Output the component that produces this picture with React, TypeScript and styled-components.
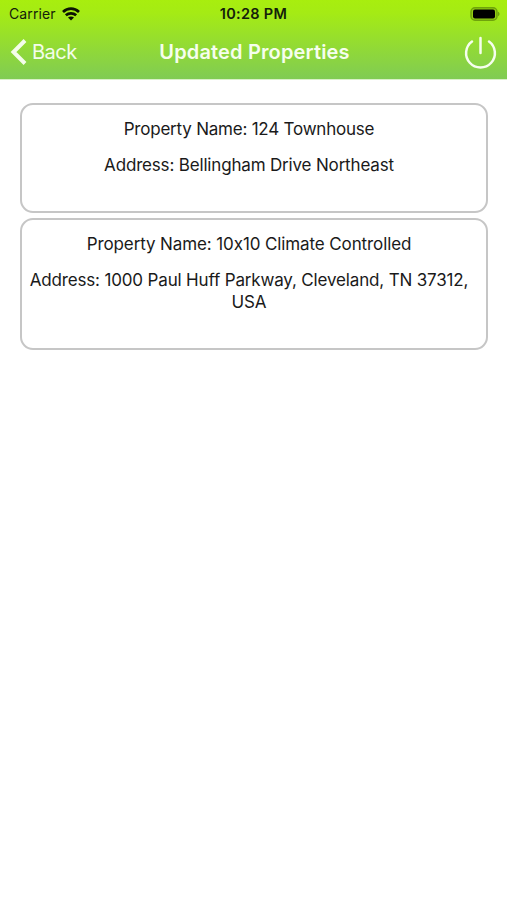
import React from "react";
import styled, { createGlobalStyle } from "styled-components";

const GlobalStyle = createGlobalStyle`
  * { box-sizing: border-box; }
  body { margin: 0; background: #fff; font-family: Inter, "Liberation Sans", sans-serif; }
`;

const Screen = styled.div`
  min-height: 900px;
  background: #fff;
`;

const Header = styled.header`
  height: 80px;
  border-bottom: 1px solid #d9f0c8;
  background: linear-gradient(180deg, #a8ee0e 0%, #a5eb14 16%, #80cb54 100%);
`;

const StatusBar = styled.div`
  height: 27px;
  display: grid;
  grid-template-columns: 1fr auto 1fr;
  align-items: center;
  padding: 0 7px 0 9px;
  color: #14200a;
`;

const Carrier = styled.div`
  display: flex;
  align-items: center;
  gap: 6px;
  font-size: 14px;
  line-height: 27px;
  letter-spacing: 0.1px;
`;

const Clock = styled.div`
  font-size: 14.5px;
  font-weight: 600;
  line-height: 27px;
  letter-spacing: 0.3px;
  margin-right: 2px;
`;

const BatteryIcon = styled.svg`
  justify-self: end;
`;

const NavBar = styled.nav`
  height: 50px;
  display: grid;
  grid-template-columns: 1fr auto 1fr;
  align-items: center;
  padding: 0 10px;
  color: #fff;
`;

const BackButton = styled.button`
  display: flex;
  align-items: center;
  gap: 5px;
  padding: 0;
  border: 0;
  background: none;
  color: #f4fdea;
  font: 400 20px/24px Inter, sans-serif;
  letter-spacing: -0.5px;
`;

const Title = styled.h1`
  margin: 0 -1px 0 1px;
  color: #f6feee;
  font-size: 20px;
  font-weight: 600;
  line-height: 24px;
  letter-spacing: 0.15px;
`;

const PowerButton = styled.button`
  display: flex;
  justify-self: end;
  padding: 0;
  border: 0;
  background: none;
  color: #f6feee;
`;

const List = styled.main`
  display: flex;
  flex-direction: column;
  gap: 5px;
  padding: 23px 19px 0 20px;
`;

const Card = styled.article<{ $height: number }>`
  height: ${(p) => p.$height}px;
  padding: 13px 17px 0 7px;
  border: 2px solid #c6c6c6;
  border-radius: 13px;
  text-align: center;
`;

const Line = styled.p<{ $spacing: number }>`
  margin: 0 0 14px;
  color: #1a1a1a;
  font-size: 17px;
  line-height: 22px;
  font-feature-settings: "calt" 0;
  letter-spacing: ${(p) => p.$spacing}px;
`;

const properties = [
  {
    name: "124 Townhouse",
    address: "Bellingham Drive Northeast",
    height: 110,
    nameSpacing: -0.22,
    addressSpacing: -0.17,
  },
  {
    name: "10x10 Climate Controlled",
    address: "1000 Paul Huff Parkway, Cleveland, TN 37312, USA",
    height: 132,
    nameSpacing: -0.11,
    addressSpacing: -0.16,
  },
];

export default function App() {
  return (
    <Screen>
      <GlobalStyle />
      <Header>
        <StatusBar>
          <Carrier>
            <span>Carrier</span>
            <svg width="18" height="14" viewBox="0 0 18 14" fill="none" stroke="#0c1403" strokeWidth="2.7">
              <path d="M1 5C5.6.6 12.4.6 17 5" />
              <path d="M3.8 8.3c3-2.6 7.4-2.6 10.4 0" />
              <path d="M9 13.4 6 10.6c1.7-1.5 4.3-1.5 6 0Z" fill="#0c1403" stroke="none" />
            </svg>
          </Carrier>
          <Clock>10:28 PM</Clock>
          <BatteryIcon width="30" height="14" viewBox="0 0 30 14">
            <rect x="1" y=".75" width="26" height="12.5" rx="4" fill="#93cf13" stroke="#6fa30c" strokeWidth="1.5" />
            <rect x="3" y="2.5" width="22" height="9" rx="2" fill="#000" />
            <path d="M28 4.8c2 .7 2 3.7 0 4.4Z" fill="#6fa30c" />
          </BatteryIcon>
        </StatusBar>
        <NavBar>
          <BackButton>
            <svg width="17" height="26" viewBox="0 0 17 26" fill="none" stroke="currentColor" strokeWidth="4">
              <path d="M15 1.5 3.5 13 15 24.5" />
            </svg>
            <span>Back</span>
          </BackButton>
          <Title>Updated Properties</Title>
          <PowerButton aria-label="Log out">
            <svg width="33" height="33" viewBox="0 0 33 33" fill="none" stroke="currentColor" strokeWidth="2.5" strokeLinecap="round">
              <path d="M8 5.5A14.4 14.4 0 1 0 25 5.5" />
              <path d="M16.5 2v15" />
            </svg>
          </PowerButton>
        </NavBar>
      </Header>
      <List>
        {properties.map((p) => (
          <Card key={p.name} $height={p.height}>
            <Line $spacing={p.nameSpacing}>Property Name: {p.name}</Line>
            <Line $spacing={p.addressSpacing}>Address: {p.address}</Line>
          </Card>
        ))}
      </List>
    </Screen>
  );
}
